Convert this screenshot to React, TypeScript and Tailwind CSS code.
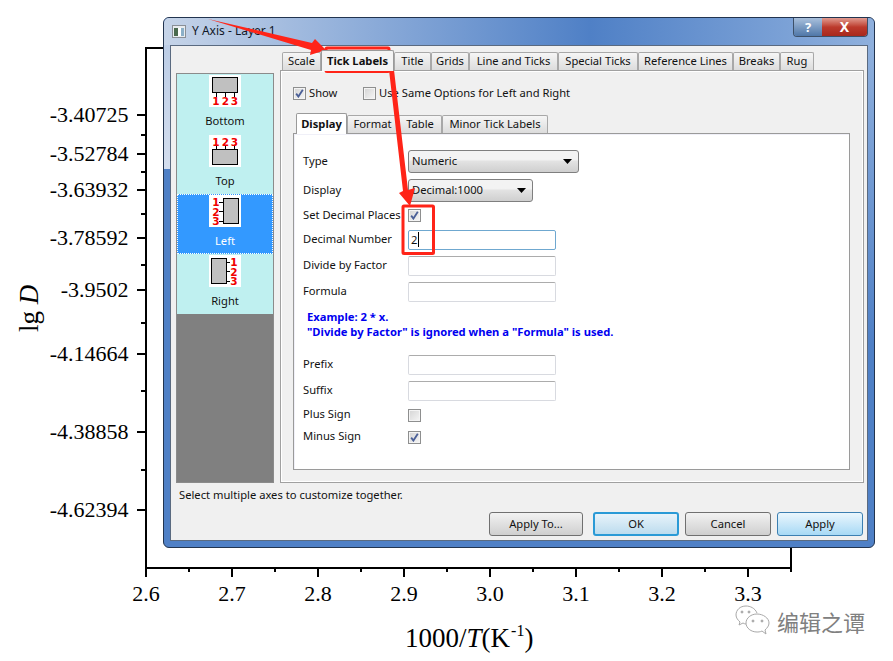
import React from "react";

const serif = { fontFamily: '"Liberation Serif", serif' };

const yMajor: [number, string][] = [
  [115, "-3.40725"],
  [154, "-3.52784"],
  [190, "-3.63932"],
  [238, "-3.78592"],
  [290, "-3.9502"],
  [354, "-4.14664"],
  [432, "-4.38858"],
  [510, "-4.62394"],
];
const yMinor = [135, 172, 214, 265, 323, 391, 470];
const xMajor: [number, string][] = [
  [146, "2.6"],
  [232, "2.7"],
  [318, "2.8"],
  [404, "2.9"],
  [490, "3.0"],
  [576, "3.1"],
  [662, "3.2"],
  [748, "3.3"],
];
const xMinor = [189, 275, 361, 447, 533, 619, 705, 791];

function Chart() {
  return (
    <svg className="absolute left-0 top-0" width="893" height="661" style={serif}>
      <g stroke="#000" strokeWidth="2" fill="none">
        <path d="M163 48H146V568H791V548" />
        {yMajor.map(([y]) => (
          <path key={y} d={`M137 ${y}H146`} />
        ))}
        {yMinor.map((y) => (
          <path key={y} d={`M141 ${y}H146`} />
        ))}
        {xMajor.map(([x]) => (
          <path key={x} d={`M${x} 568V577`} />
        ))}
        {xMinor.map((x) => (
          <path key={x} d={`M${x} 568V572`} />
        ))}
      </g>
      <g fontSize="22" fill="#000">
        {yMajor.map(([y, t]) => (
          <text key={t} x="128.5" y={y + 7} textAnchor="end">
            {t}
          </text>
        ))}
        {xMajor.map(([x, t]) => (
          <text key={t} x={x} y="601" textAnchor="middle">
            {t}
          </text>
        ))}
      </g>
      <text fontSize="27" fill="#000" transform="rotate(-90 38 332)" x="38" y="332">
        lg <tspan fontStyle="italic">D</tspan>
      </text>
      <text fontSize="27" fill="#000" x="405" y="647">
        1000/<tspan fontStyle="italic">T</tspan>(K
        <tspan fontSize="16" dy="-11" dx="1">-1</tspan>
        <tspan dy="11">)</tspan>
      </text>
    </svg>
  );
}

function AxisIcon({ side }: { side: "bottom" | "top" | "left" | "right" }) {
  const num = {
    fill: "#f00000",
    fontSize: 10.5,
    fontWeight: 700,
    textAnchor: "middle" as const,
    fontFamily: '"DejaVu Sans", sans-serif',
  };
  return (
    <svg width="32" height="32" className="bg-white shrink-0">
      {side === "bottom" && (
        <>
          <rect x="3.5" y="2.5" width="25" height="15" fill="#c0c0c0" stroke="#000" />
          <path d="M7.5 18V22M16.5 18V22M25.5 18V22" stroke="#000" />
          <text x="7" y="30" {...num}>1</text>
          <text x="16.3" y="30" {...num}>2</text>
          <text x="25.3" y="30" {...num}>3</text>
        </>
      )}
      {side === "top" && (
        <>
          <rect x="3.5" y="14.5" width="25" height="15" fill="#c0c0c0" stroke="#000" />
          <path d="M7.5 11V14M16.5 11V14M25.5 11V14" stroke="#000" />
          <text x="7" y="10.5" {...num}>1</text>
          <text x="16.3" y="10.5" {...num}>2</text>
          <text x="25.3" y="10.5" {...num}>3</text>
        </>
      )}
      {side === "left" && (
        <>
          <rect x="14.5" y="3.5" width="15" height="25" fill="#c0c0c0" stroke="#000" />
          <path d="M10 7.5H14M10 16.5H14M10 26.5H14" stroke="#000" />
          <text x="7" y="11" {...num}>1</text>
          <text x="7" y="20.5" {...num}>2</text>
          <text x="7" y="29.5" {...num}>3</text>
        </>
      )}
      {side === "right" && (
        <>
          <rect x="2.5" y="3.5" width="15" height="25" fill="#c0c0c0" stroke="#000" />
          <path d="M18 7.5H21M18 16.5H21M18 26.5H21" stroke="#000" />
          <text x="25" y="11" {...num}>1</text>
          <text x="25" y="20.5" {...num}>2</text>
          <text x="25" y="29.5" {...num}>3</text>
        </>
      )}
    </svg>
  );
}

function AxisItem({ side, label, active }: { side: "bottom" | "top" | "left" | "right"; label: string; active?: boolean }) {
  return (
    <div
      className={
        active
          ? "h-[60px] flex flex-col items-center bg-[#3399ff] text-white border border-dotted border-white"
          : "h-[60px] flex flex-col items-center pt-[1px]"
      }
    >
      <AxisIcon side={side} />
      <span className="mt-[6px] leading-[16px]">{label}</span>
    </div>
  );
}

function Tab({ label, w, active, small }: { label: string; w: string; active?: boolean; small?: boolean }) {
  if (active) {
    return (
      <div
        className={`${w} h-[21px] -mb-px relative z-10 flex items-center justify-center border border-b-0 border-[#9a9a9a] ${small ? "bg-white pb-[1px]" : "bg-[#f4f4f4] pb-[1px]"} font-bold rounded-t-[2px]`}
      >
        {label}
      </div>
    );
  }
  return (
    <div className={`${w} h-[18px] pb-[2px] flex items-center justify-center border border-b-0 border-[#a8a8a8] bg-gradient-to-b from-[#f6f6f6] to-[#dcdcdc] rounded-t-[2px]`}>
      {label}
    </div>
  );
}

function Check({ checked }: { checked?: boolean }) {
  return (
    <span className="w-[13px] h-[13px] shrink-0 flex items-center justify-center border border-[#8e8f8f] bg-gradient-to-br from-[#d4d4d4] to-[#f6f6f6] shadow-[inset_0_0_0_1px_#f4f4f4]">
      {checked && (
        <svg width="9" height="9" viewBox="0 0 9 9">
          <path d="M1.2 4.6L3.4 7.6L7.8 0.8" fill="none" stroke="#4a5f97" strokeWidth="1.8" />
        </svg>
      )}
    </span>
  );
}

function Input({ value, focus }: { value?: string; focus?: boolean }) {
  return (
    <div
      className={`w-[148px] h-[20px] bg-white rounded-[2px] border flex items-center pl-[2px] pb-[1px] ${
        focus ? "border-[#6fa8d0]" : "border-[#d8dae0] border-t-[#acacac]"
      }`}
    >
      {value}
      {focus && <span className="ml-[1px] w-px h-[15px] bg-black" />}
    </div>
  );
}

function Combo({ label, w }: { label: string; w: string }) {
  return (
    <div className={`${w} h-[23px] flex items-center justify-between pl-[3px] pr-[6px] border border-[#7f7f7f] rounded-[3px] bg-gradient-to-b from-[#f3f3f3] from-40% via-[#e2e2e2] via-50% to-[#cfcfcf]`}>
      <span className="pb-[2px]">{label}</span>
      <svg width="9" height="5">
        <path d="M0 0H9L4.5 5Z" fill="#000" />
      </svg>
    </div>
  );
}

function Row({ label, className, children }: { label: string; className: string; children: React.ReactNode }) {
  return (
    <div className={`flex items-center ${className}`}>
      <span className="w-[105px] shrink-0 whitespace-nowrap pb-[2px]">{label}</span>
      {children}
    </div>
  );
}

function Btn({ label, w, kind }: { label: string; w: string; kind?: "ok" | "apply" }) {
  const cls =
    kind === "ok"
      ? "border-[#2a9ad6] border-2 from-[#e8f3fa] to-[#bcdcee]"
      : kind === "apply"
        ? "border-[#3c7fb1] from-[#eaf6fd] to-[#a7d9f5]"
        : "border-[#707070] from-[#f2f2f2] to-[#cfcfcf]";
  return (
    <div className={`${w} h-[24px] flex items-center justify-center rounded-[3px] border bg-gradient-to-b ${cls}`}>
      {label}
    </div>
  );
}

function Dialog() {
  return (
    <div className="absolute left-[163px] top-[17px] w-[712px] h-[531px] rounded-[6px] border border-[#22344f] bg-[#4f80c6] flex flex-col text-[11.2px] leading-[16px] text-[#111] overflow-hidden">
      <div className="absolute left-0 top-[27px] w-[6px] h-[124px] bg-gradient-to-b from-[#bccde6] to-[#d4deee]" />
      <div className="absolute right-0 top-[27px] w-[6px] h-[300px] bg-gradient-to-b from-[#8fb0dd] to-[#4f80c6]" />
      <div className="h-[27px] shrink-0 flex justify-between items-start pl-[8px] pr-[6px] bg-gradient-to-r from-[#c6d4e8] via-[#4f80c6] via-60% to-[#8fb0dd]">
        <div className="flex items-center mt-[5px] gap-[6px]">
          <svg width="14" height="13">
            <rect x="0.5" y="0.5" width="13" height="12" fill="#e8ecef" stroke="#8a8f96" />
            <rect x="2" y="3" width="4" height="8" fill="#4a6a4e" />
            <rect x="6" y="3" width="3" height="8" fill="#fff" />
            <rect x="9" y="3" width="3" height="8" fill="#8cb0c8" />
          </svg>
          <span className="text-[12px] text-[#101828]">Y Axis - Layer 1</span>
        </div>
        <div className="flex h-[19px] border border-t-0 border-[#3d5068] rounded-b-[4px] overflow-hidden">
          <div className="w-[28px] flex items-center justify-center bg-gradient-to-b from-[#a9c0dc] to-[#4f77a8] font-bold text-[13px] text-white">?</div>
          <div className="w-[45px] flex items-center justify-center bg-gradient-to-b from-[#e09a90] via-[#bc3a2c] to-[#a8281c] font-bold text-[14px] text-white">X</div>
        </div>
      </div>
      <div className="relative mx-[6px] mb-[6px] flex-1 border border-[#5a6a80] bg-[#f0f0f0] flex flex-col pl-[5px] pr-[3px]">
        <div className="flex gap-[6px] h-[437px] shrink-0">
          <div className="w-[98px] shrink-0 mt-[27px] h-[410px] border border-[#8b8b8b] bg-[#808080] flex flex-col">
            <div className="bg-[#bff0f0]">
              <AxisItem side="bottom" label="Bottom" />
              <AxisItem side="top" label="Top" />
              <AxisItem side="left" label="Left" active />
              <AxisItem side="right" label="Right" />
            </div>
          </div>
          <div className="w-[584px] shrink-0 flex flex-col">
            <div className="flex items-end h-[24px] pl-[2px] shrink-0">
              <Tab label="Scale" w="w-[39px]" />
              <Tab label="Tick Labels" w="w-[73px]" active />
              <Tab label="Title" w="w-[37px]" />
              <Tab label="Grids" w="w-[38px]" />
              <Tab label="Line and Ticks" w="w-[89px]" />
              <Tab label="Special Ticks" w="w-[80px]" />
              <Tab label="Reference Lines" w="w-[95px]" />
              <Tab label="Breaks" w="w-[47px]" />
              <Tab label="Rug" w="w-[34px]" />
            </div>
            <div className="flex-1 border border-[#a0a0a0] shadow-[inset_0_0_0_1px_#fff] bg-[#f0f0f0] pl-[12px] pr-[13px]">
              <div className="flex items-center mt-[14px] h-[16px]">
                <Check checked />
                <span className="ml-[3px] w-[54px]">Show</span>
                <Check />
                <span className="ml-[3px]">Use Same Options for Left and Right</span>
              </div>
              <div className="flex items-end h-[21px] mt-[11px] pl-[3px]">
                <Tab label="Display" w="w-[51px]" active small />
                <Tab label="Format" w="w-[51px]" />
                <Tab label="Table" w="w-[44px]" />
                <Tab label="Minor Tick Labels" w="w-[106px]" />
              </div>
              <div className="h-[337px] border border-[#9a9a9a] bg-white shadow-[inset_1px_1px_0_#f0f0f8] pl-[9px]">
                <Row label="Type" className="mt-[16px] h-[23px]"><Combo label="Numeric" w="w-[171px]" /></Row>
                <Row label="Display" className="mt-[6px] h-[23px]"><Combo label="Decimal:1000" w="w-[125px]" /></Row>
                <Row label="Set Decimal Places" className="mt-[1px] h-[25px]"><Check checked /></Row>
                <Row label="Decimal Number" className="mt-[2px] h-[20px]"><Input value="2" focus /></Row>
                <Row label="Divide by Factor" className="mt-[6px] h-[20px]"><Input /></Row>
                <Row label="Formula" className="mt-[6px] h-[20px]"><Input /></Row>
                <div className="mt-[7px] pl-[4px] h-[30px] font-bold text-[#0000f0] leading-[15px]">
                  <div>Example: 2 * x.</div>
                  <div>"Divide by Factor" is ignored when a "Formula" is used.</div>
                </div>
                <Row label="Prefix" className="mt-[16px] h-[20px]"><Input /></Row>
                <Row label="Suffix" className="mt-[6px] h-[20px]"><Input /></Row>
                <Row label="Plus Sign" className="mt-[4px] h-[20px]"><Check /></Row>
                <Row label="Minus Sign" className="mt-[2px] h-[20px]"><Check checked /></Row>
              </div>
            </div>
          </div>
        </div>
        <div className="pl-[3px] mt-[4px] h-[16px] shrink-0">Select multiple axes to customize together.</div>
        <div className="flex justify-end gap-[6px] mt-[9px] pr-[1px]">
          <div className="mr-[4px]"><Btn label="Apply To..." w="w-[94px]" /></div>
          <Btn label="OK" w="w-[86px]" kind="ok" />
          <Btn label="Cancel" w="w-[86px]" />
          <Btn label="Apply" w="w-[86px]" kind="apply" />
        </div>
      </div>
    </div>
  );
}

function Annotations() {
  return (
    <svg className="absolute left-0 top-0 pointer-events-none" width="893" height="661">
      <g fill="#ff2418">
        <path d="M208 19L312 43L315 39L326 50L310 55L311 50Z" />
        <path d="M389 70L394 70L408 190L415 188L410 206L399 193L403 191Z" />
      </g>
      <g fill="none" stroke="#ff2418" strokeWidth="3">
        <rect x="326" y="48" width="63" height="23.5" rx="1" />
        <rect x="403" y="206" width="30.5" height="47.5" rx="1" />
      </g>
    </svg>
  );
}

function Watermark() {
  return (
    <div className="absolute left-[735px] top-[605px] flex items-center gap-[6px]">
      <svg width="36" height="32" viewBox="0 0 36 32" fill="none" stroke="#a8a8a8" strokeWidth="1">
        <path d="M22 8C20 3 15 1 11 1C5 1 1 5 1 10C1 13 3 15 5 17L4 20L8 18C9 18.5 10 19 11 19" />
        <path d="M22 9C28 9 34 13 34 18C34 21 32 23 30 25L31 29L27 26C25 27 23 27 22 27C16 27 11 23 11 18C11 13 16 9 22 9Z" />
        <circle cx="7" cy="7" r="1" fill="#a8a8a8" />
        <circle cx="14" cy="7" r="1" fill="#a8a8a8" />
        <circle cx="18" cy="16" r="1" fill="#a8a8a8" />
        <circle cx="27" cy="16" r="1" fill="#a8a8a8" />
      </svg>
      <span className="text-[22px] leading-[24px] text-[#808080] font-['Noto_Sans_CJK_SC',sans-serif]">编辑之谭</span>
    </div>
  );
}

export default function App() {
  return (
    <div className="relative w-[893px] h-[661px] bg-white overflow-hidden font-['Noto_Sans',sans-serif]">
      <Chart />
      <Dialog />
      <Annotations />
      <Watermark />
    </div>
  );
}
